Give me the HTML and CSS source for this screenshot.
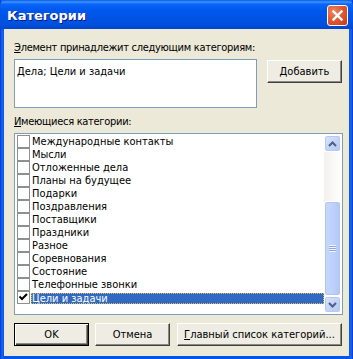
FILE: index.html
```html
<!DOCTYPE html>
<html lang="ru">
<head>
    <meta charset="UTF-8">
    <title>Категории</title>
    <link rel="stylesheet" href="styles.css">
</head>
<body>
    <div class="window">
        <div class="titlebar">
            <span class="title">Категории</span>
            <span class="close">
                <svg width="19" height="19" viewBox="0 0 19 19">
                    <path d="M5.5 5.5 L13.5 13.5 M13.5 5.5 L5.5 13.5" stroke="#fff" stroke-width="2.4" stroke-linecap="square"/>
                </svg>
            </span>
        </div>

        <div class="client">
            <div class="label"><u>Э</u>лемент принадлежит следующим категориям:</div>
            <div class="top-row">
                <div class="textbox">Дела; Цели и задачи</div>
                <div class="btn add"><span><u>Д</u>обавить</span></div>
            </div>

            <div class="label label-list"><u>И</u>меющиеся категории:</div>
            <div class="listbox">
                <ul class="items">
                    <li class="item"><span class="check"></span><span class="name">Международные контакты</span></li>
                    <li class="item"><span class="check"></span><span class="name">Мысли</span></li>
                    <li class="item"><span class="check"></span><span class="name">Отложенные дела</span></li>
                    <li class="item"><span class="check"></span><span class="name">Планы на будущее</span></li>
                    <li class="item"><span class="check"></span><span class="name">Подарки</span></li>
                    <li class="item"><span class="check"></span><span class="name">Поздравления</span></li>
                    <li class="item"><span class="check"></span><span class="name">Поставщики</span></li>
                    <li class="item"><span class="check"></span><span class="name">Праздники</span></li>
                    <li class="item"><span class="check"></span><span class="name">Разное</span></li>
                    <li class="item"><span class="check"></span><span class="name">Соревнования</span></li>
                    <li class="item"><span class="check"></span><span class="name">Состояние</span></li>
                    <li class="item"><span class="check"></span><span class="name">Телефонные звонки</span></li>
                    <li class="item selected">
                        <span class="check checked">
                            <svg width="11" height="11" viewBox="0 0 11 11">
                                <path d="M1.5 4.5 L4 7 L9 2" stroke="#000" stroke-width="2" fill="none"/>
                            </svg>
                        </span>
                        <span class="name">Цели и задачи</span>
                    </li>
                </ul>

                <div class="scrollbar">
                    <div class="sb-btn">
                        <svg width="9" height="6" viewBox="0 0 9 6"><path d="M1 5 L4.5 1.5 L8 5" stroke="#4D6185" stroke-width="2" fill="none"/></svg>
                    </div>
                    <div class="track">
                        <div class="thumb">
                            <span class="grip"></span>
                        </div>
                    </div>
                    <div class="sb-btn">
                        <svg width="9" height="6" viewBox="0 0 9 6"><path d="M1 1 L4.5 4.5 L8 1" stroke="#4D6185" stroke-width="2" fill="none"/></svg>
                    </div>
                </div>
            </div>

            <div class="buttons">
                <div class="btn default">OK</div>
                <div class="btn cancel">Отмена</div>
                <div class="btn master"><span><u>Г</u>лавный список категорий...</span></div>
            </div>
        </div>
    </div>
</body>
</html>
```

FILE: styles.css
```css
body {
    margin: 0;
    font-family: "DejaVu Sans Condensed", "DejaVu Sans", sans-serif;
    font-stretch: condensed;
    font-size: 11px;
    color: #000;
}
.window {
    width: 353px;
    height: 359px;
    box-sizing: border-box;
    display: flex;
    flex-direction: column;
    background: linear-gradient(to right, #0831D9 0, #166AEE 2px, #0055EA 4px, #0055EA 349px, #166AEE 351px, #0831D9 353px);
}
.titlebar {
    height: 29px;
    display: flex;
    align-items: center;
    justify-content: space-between;
    padding: 0 5px 0 7px;
    background: linear-gradient(to bottom, #0A5AE8 0, #3D95FF 2px, #0A66F8 4px, #0058EE 10px, #0054E3 18px, #0151E0 24px, #0046CC 29px);
    border-radius: 6px 6px 0 0;
}
.title {
    color: #fff;
    font-family: "DejaVu Sans", sans-serif;
    font-stretch: normal;
    font-weight: bold;
    font-size: 13px;
    text-shadow: 1px 1px #0A1883;
    margin-top: 1px;
}
.close {
    width: 21px;
    height: 21px;
    box-sizing: border-box;
    border: 1px solid #fff;
    border-radius: 3px;
    background: radial-gradient(circle at 30% 30%, #F08460 0, #E15A34 45%, #C9381A 100%);
    display: flex;
    align-items: center;
    justify-content: center;
    margin-top: 2px;
}
.client {
    flex: 1;
    margin: 0 4px 3px 4px;
    background: #ECE9D8;
    padding: 12px 7px 0 10px;
    display: flex;
    flex-direction: column;
}
.label {
    line-height: 13px;
    letter-spacing: -0.3px;
}
.top-row {
    display: flex;
    margin-top: 5px;
}
.textbox {
    width: 243px;
    height: 49px;
    box-sizing: border-box;
    border: 1px solid #7F9DB9;
    background: #fff;
    padding: 5px 2px;
    line-height: 13px;
}
.btn {
    height: 23px;
    width: 75px;
    box-sizing: border-box;
    display: flex;
    align-items: center;
    justify-content: center;
    background: #EEECE3;
    border: 1px solid;
    border-color: #fff #404040 #404040 #fff;
    box-shadow: inset -1px -1px #8C8A80;
}
.add {
    margin: 1px 0 0 10px;
}
.label-list {
    margin-top: 7px;
}
.listbox {
    margin-top: 5px;
    width: 329px;
    height: 182px;
    box-sizing: border-box;
    border: 1px solid #7F9DB9;
    background: #fff;
    padding: 1px;
    display: flex;
}
.items {
    flex: 1;
    list-style: none;
    margin: 0;
    padding: 0 0 0 1px;
}
.item {
    height: 13px;
    display: flex;
    align-items: center;
}
.check {
    width: 13px;
    height: 13px;
    box-sizing: border-box;
    border: 1px solid #8E8F8F;
    background: #fff;
    display: flex;
    align-items: center;
    justify-content: center;
}
.name {
    margin-left: 1px;
    padding-left: 1px;
    line-height: 13px;
}
.selected .name {
    flex: 1;
    height: 11px;
    line-height: 11px;
    margin-top: 2px;
    background: #316AC5;
    color: #fff;
    outline: 1px dotted #E6B84A;
    outline-offset: -1px;
}
.scrollbar {
    width: 17px;
    display: flex;
    flex-direction: column;
}
.sb-btn {
    height: 17px;
    box-sizing: border-box;
    border: 1px solid #fff;
    border-radius: 3px;
    background: linear-gradient(135deg, #DCE6FD 0, #C4D4FB 50%, #B4C8F6 100%);
    box-shadow: inset 0 0 0 1px #B6C9F3;
    display: flex;
    align-items: center;
    justify-content: center;
}
.track {
    flex: 1;
    display: flex;
    flex-direction: column;
    justify-content: flex-end;
    background: linear-gradient(to right, #F3F1EC, #FEFEFB);
}
.thumb {
    height: 95px;
    box-sizing: border-box;
    border: 1px solid #fff;
    border-radius: 3px;
    background: linear-gradient(to right, #C8D8FD, #BCD0FB 60%, #B0C6F6);
    box-shadow: inset 0 0 0 1px #B2C6F1;
    display: flex;
    align-items: center;
    justify-content: center;
}
.grip {
    width: 7px;
    height: 7px;
    background: repeating-linear-gradient(to bottom, #EEF4FE 0, #EEF4FE 1px, #8CA8E4 1px, #8CA8E4 2px);
}
.buttons {
    display: flex;
    margin-top: 8px;
}
.default {
    border: 1px solid #000;
    box-shadow: inset 1px 1px #fff, inset -1px -1px #404040, inset -2px -2px #8C8A80;
}
.cancel {
    margin-left: 6px;
}
.master {
    margin-left: 7px;
    width: 165px;
}
```
